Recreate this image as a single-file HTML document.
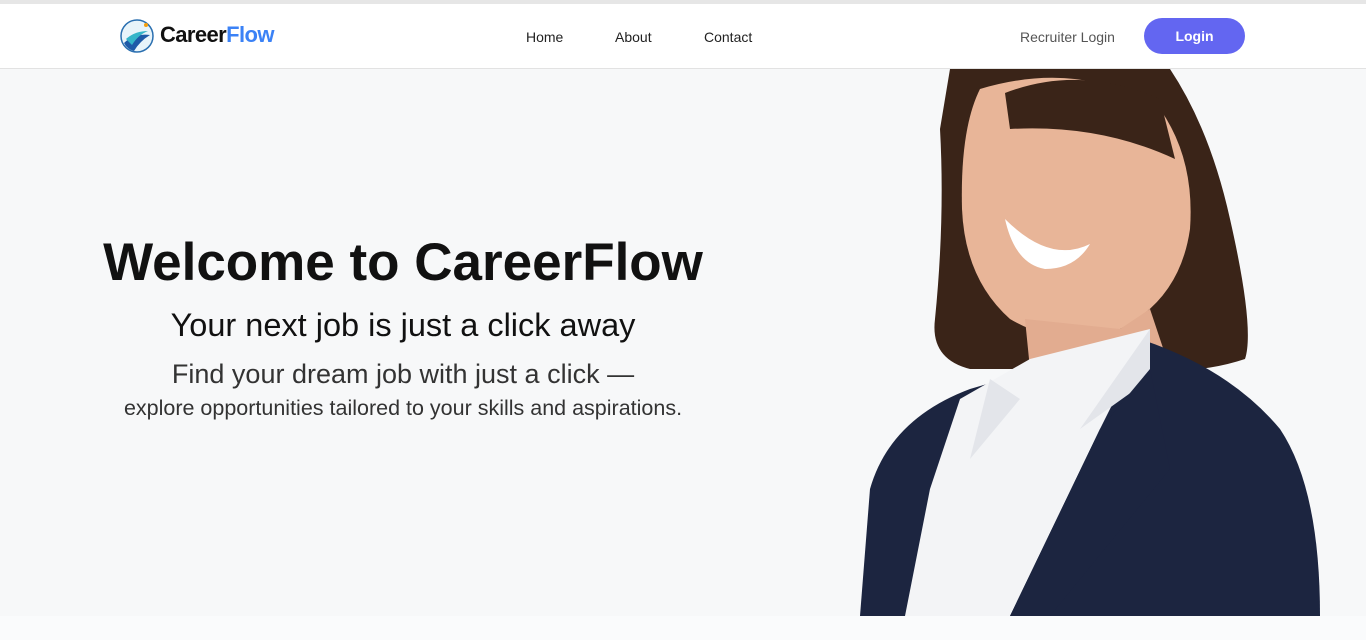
<!DOCTYPE html>
<html><head><meta charset="utf-8"><style>
*{margin:0;padding:0;box-sizing:border-box}
body{width:1366px;height:640px;overflow:hidden;background:#f7f8f9;font-family:"Liberation Sans","DejaVu Sans",sans-serif;position:relative}
.topline{position:absolute;top:0;left:0;width:1366px;height:4px;background:#e6e6e6}
header{position:absolute;top:4px;left:0;width:1366px;height:65px;background:#fff;border-bottom:1px solid #e2e2e2;z-index:3}
.logo{position:absolute;left:120px;top:15px;width:34px;height:34px}
.brand{position:absolute;left:160px;top:18px;font-size:22px;font-weight:bold;color:#111;letter-spacing:-0.6px}
.brand span{color:#3b82f6}
.nav{position:absolute;top:25px;font-size:14px;color:#222}
.rl{position:absolute;left:1020px;top:25px;font-size:14px;color:#555}
.btn{position:absolute;left:1144px;top:14px;width:101px;height:36px;border-radius:18px;background:#6366f1;color:#fff;font-size:14px;font-weight:bold;text-align:center;line-height:36px}
.hero{position:absolute;left:0;width:806px;text-align:center;color:#111;white-space:nowrap}
.bottom{position:absolute;left:0;top:616px;width:1366px;height:24px;background:#fafbfc}
</style></head><body>
<div class="topline"></div>
<header>
<svg class="logo" viewBox="0 0 34 34"><circle cx="17" cy="17" r="16" fill="#e8f4fa" stroke="#2a6fb0" stroke-width="1.5"/><path d="M4 24 Q14 14 30 16 Q20 22 14 32 Q7 30 4 24Z" fill="#1e5aa8"/><path d="M6 20 Q15 12 28 12 Q18 16 12 26Z" fill="#35b5c9"/><circle cx="26" cy="6" r="2" fill="#f59e0b"/></svg>
<div class="brand">Career<span>Flow</span></div>
<div class="nav" style="left:526px">Home</div>
<div class="nav" style="left:615px">About</div>
<div class="nav" style="left:704px">Contact</div>
<div class="rl">Recruiter Login</div>
<div class="btn">Login</div>
</header>
<div class="hero" style="top:232px;font-size:53px;font-weight:bold">Welcome to CareerFlow</div>
<div class="hero" style="top:307px;font-size:32.5px">Your next job is just a click away</div>
<div class="hero" style="top:359px;font-size:27px;color:#333">Find your dream job with just a click —</div>
<div class="hero" style="top:396px;font-size:21.5px;color:#333">explore opportunities tailored to your skills and aspirations.</div>
<svg style="position:absolute;left:850px;top:69px" width="480" height="547" viewBox="0 0 480 547">
<path d="M100 0 L320 0 Q360 60 380 150 Q405 260 395 290 Q350 305 300 300 L120 300 Q80 290 85 250 Q95 150 90 60Z" fill="#3a2418"/>
<path d="M130 20 Q230 -10 310 40 Q345 90 340 160 Q330 230 270 260 Q210 280 160 250 Q115 210 112 140 Q110 60 130 20Z" fill="#e8b598"/>
<path d="M270 260 L300 240 L320 300 L180 300 L175 250Z" fill="#e2ac90"/>
<path d="M155 24 Q230 -5 310 30 L325 90 Q250 55 160 60Z" fill="#3a2418"/>
<path d="M155 150 Q200 195 240 175 Q225 200 195 200 Q165 195 155 150Z" fill="#fff"/>
<path d="M10 547 L20 420 Q40 350 120 320 L290 270 Q380 300 430 360 Q470 420 470 547Z" fill="#1c2540"/>
<path d="M110 330 L180 290 L300 260 L250 360 L160 547 L55 547 L80 420Z" fill="#f3f4f6"/>
<path d="M140 310 L120 390 L170 330Z M300 260 L230 360 L300 310Z" fill="#e3e5ea"/>
<path d="M160 547 L250 360 L300 300 L320 400 L200 547Z" fill="#1c2540"/>
</svg>
<div class="bottom"></div>
</body></html>
